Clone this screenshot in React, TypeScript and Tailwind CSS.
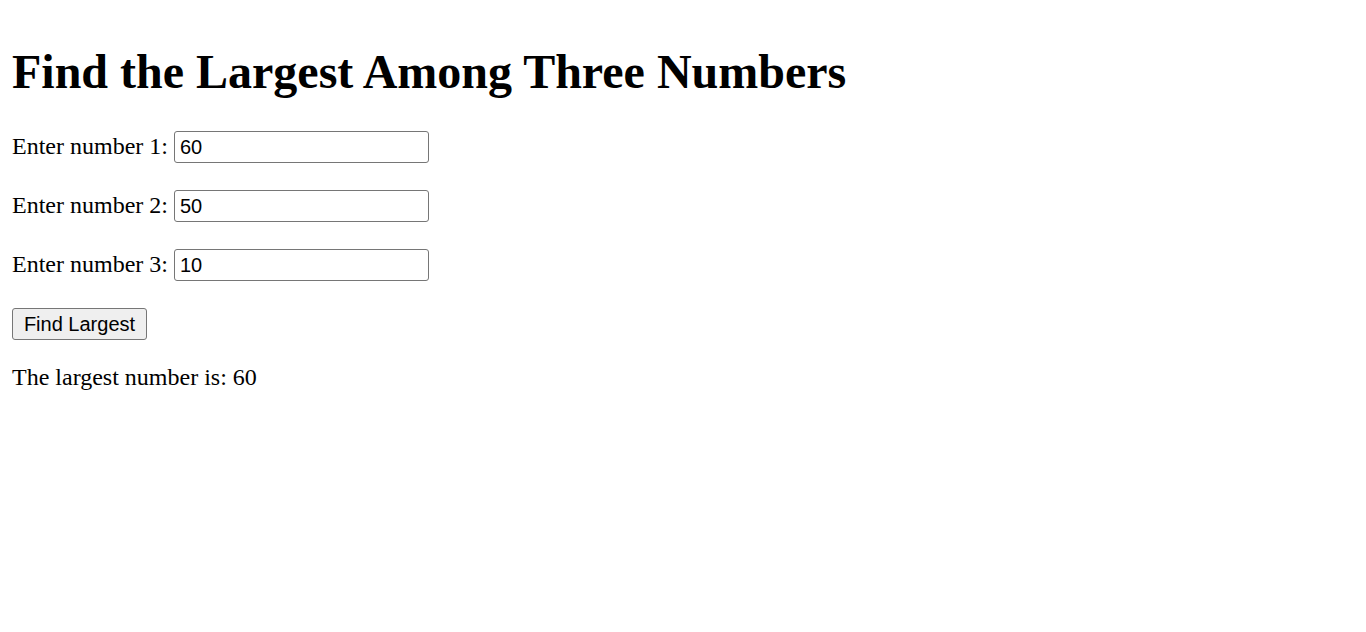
import { useState } from 'react';

const serif = 'font-["Liberation_Serif","Times_New_Roman",serif]';
const sans = 'font-["Liberation_Sans",Arial,sans-serif]';

export default function App() {
  const [nums, setNums] = useState(['60', '50', '10']);
  const [result, setResult] = useState('60');

  const findLargest = () => {
    const vals = nums.map((n) => parseFloat(n));
    setResult(String(Math.max(...vals)));
  };

  return (
    <div className={`min-h-[632px] bg-white px-3 pt-[44px] text-black ${serif}`}>
      <h1 className="text-[48px] font-bold leading-[55px]">
        Find the Largest Among Three Numbers
      </h1>

      <div className="mt-[32px] flex flex-col gap-[27px]">
        {nums.map((n, i) => (
          <div key={i} className="flex h-[32px] items-center">
            <label className="text-[24px] leading-[27.6px]">
              Enter number {i + 1}:
            </label>
            <input
              type="text"
              value={n}
              onChange={(e) => {
                const next = [...nums];
                next[i] = e.target.value;
                setNums(next);
              }}
              className={`ml-[6px] h-[32px] w-[255px] rounded-[3px] border border-[#767676] bg-white px-[5px] text-[20px] text-black outline-none ${sans}`}
            />
          </div>
        ))}

        <div className="flex h-[32px] items-center">
          <button
            onClick={findLargest}
            className={`h-[32px] w-[135px] rounded-[3px] border border-[#767676] bg-[#efefef] text-[20px] text-black ${sans}`}
          >
            Find Largest
          </button>
        </div>
      </div>

      <p className="mt-[24px] text-[24px] leading-[27.6px]">
        The largest number is: {result}
      </p>
    </div>
  );
}
